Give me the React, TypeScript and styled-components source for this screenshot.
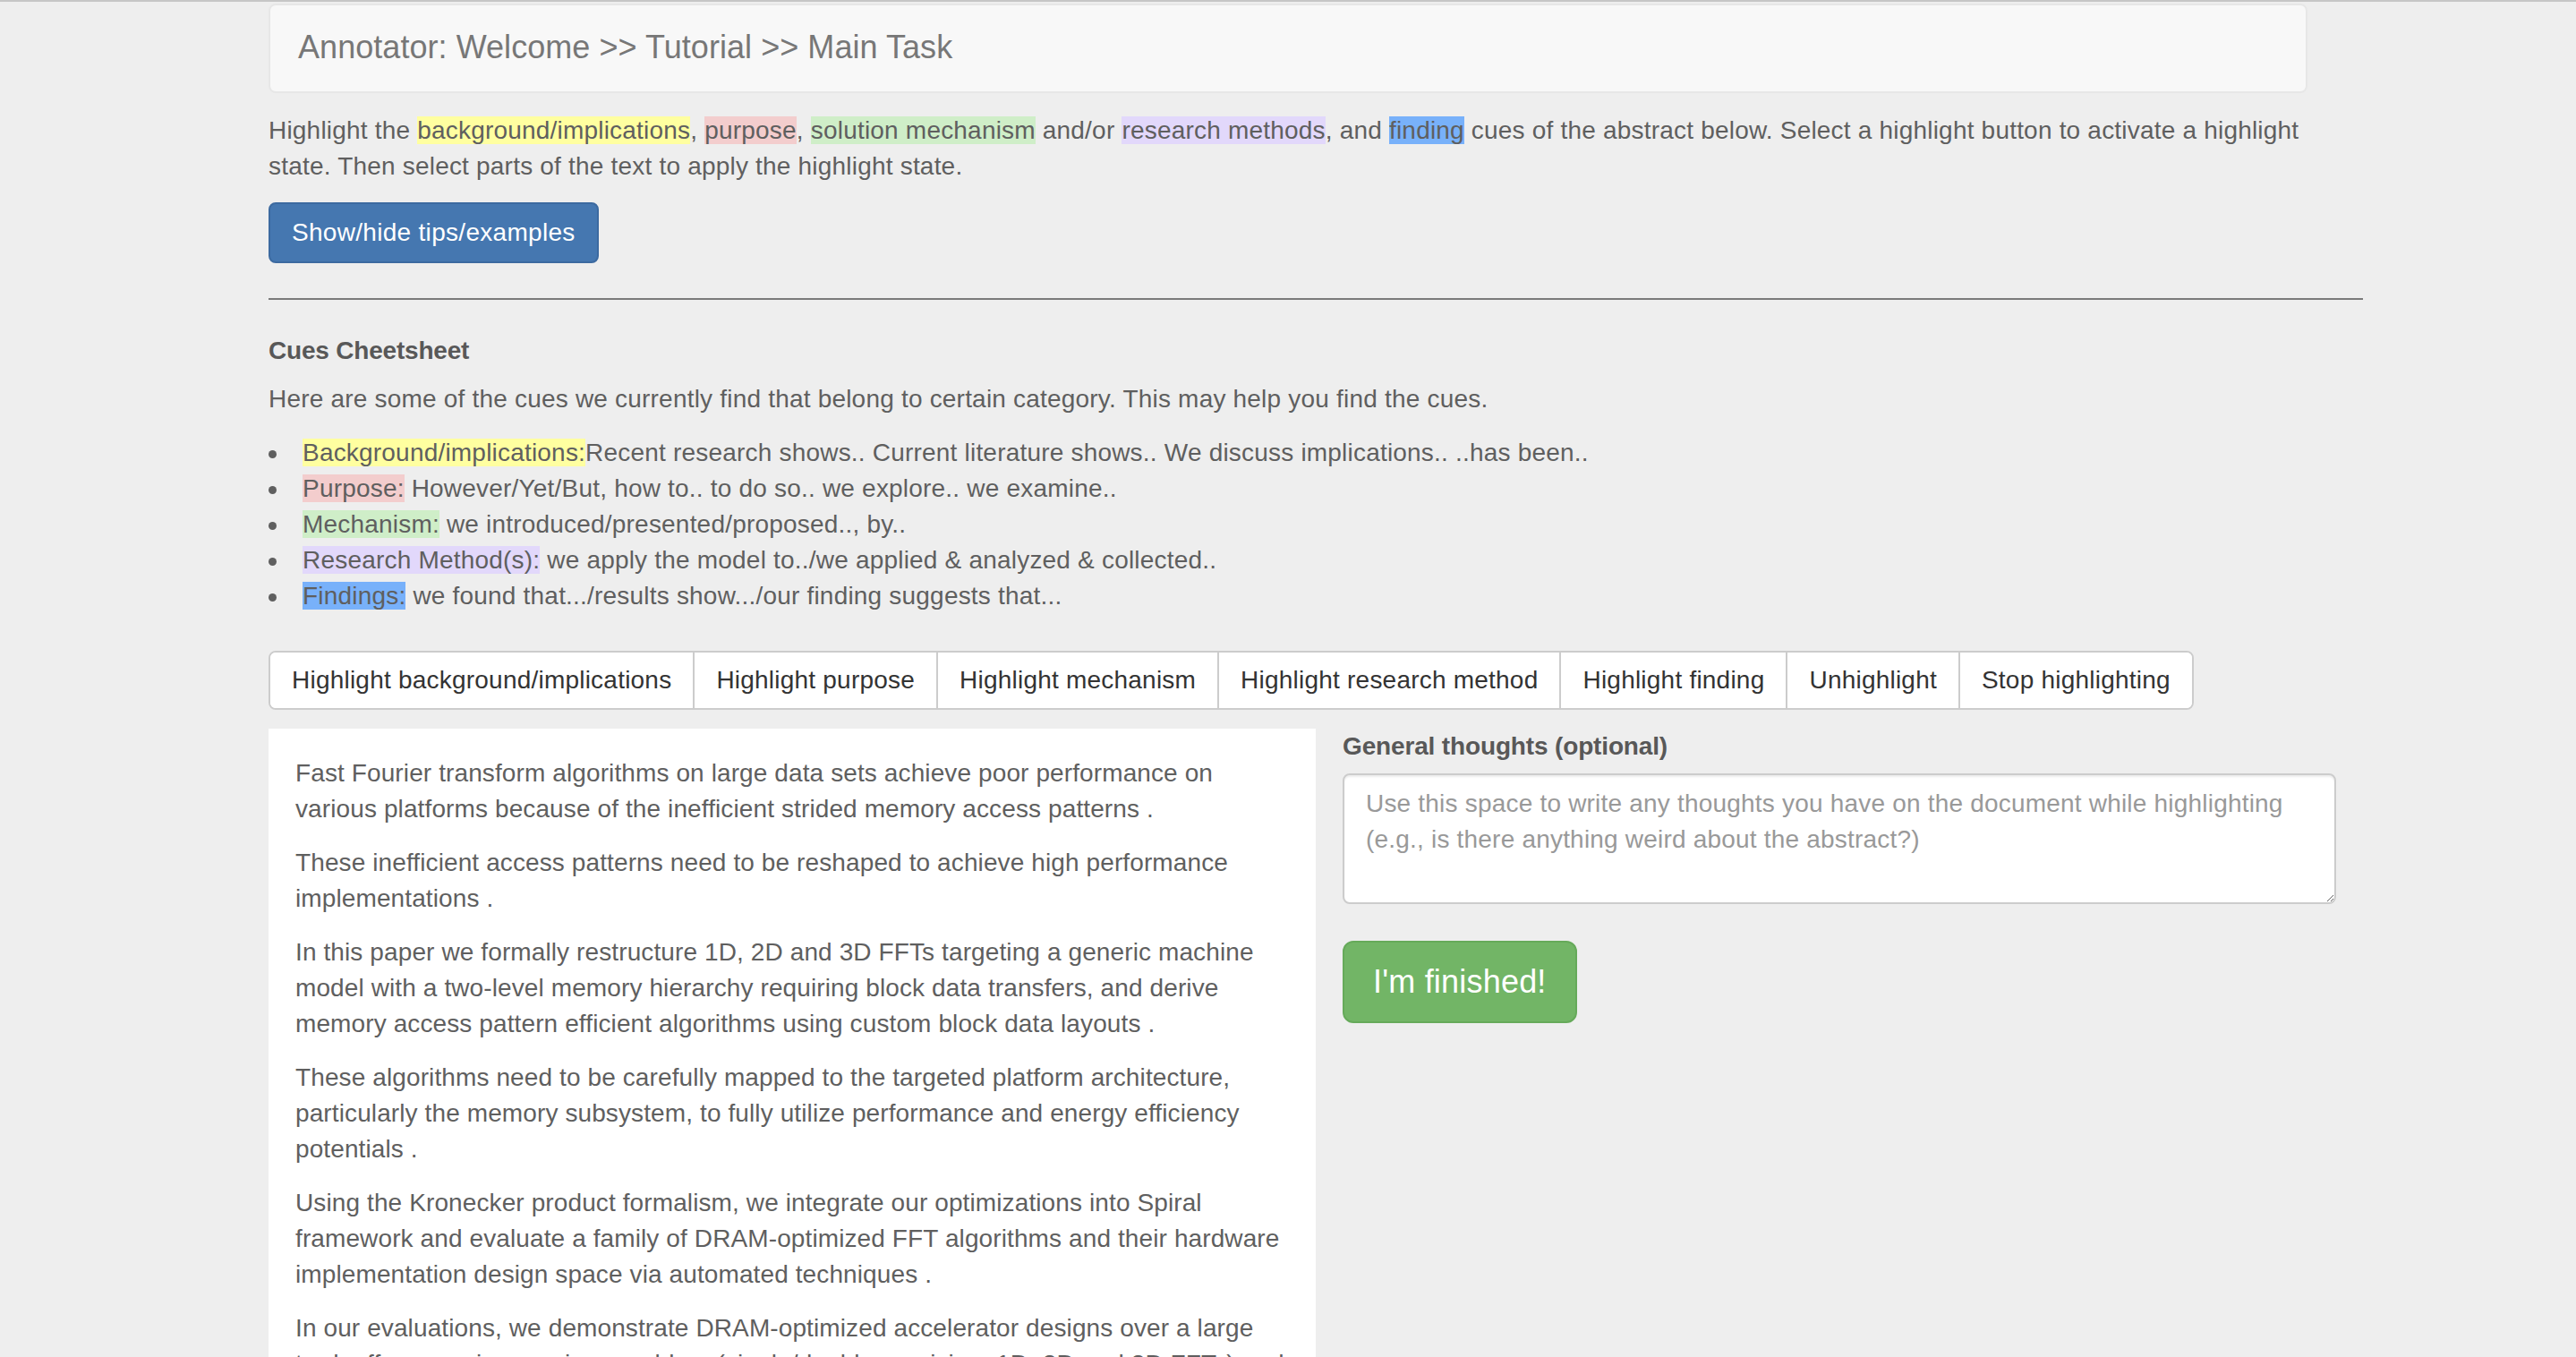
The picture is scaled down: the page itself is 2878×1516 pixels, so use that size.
import React from "react";
import styled, { createGlobalStyle } from "styled-components";

const GlobalStyle = createGlobalStyle`
  html, body {
    margin: 0;
    padding: 0;
    background: #eeeeee;
  }
  body {
    font-family: "Liberation Sans", Arial, Helvetica, sans-serif;
    font-size: 28px;
    line-height: 40px;
    color: #5f5f5f;
    letter-spacing: 0.2px;
  }
  *, *::before, *::after {
    box-sizing: border-box;
  }
`;

const Page = styled.div`
  border-top: 2px solid #c6c6c6;
  padding-top: 2px;
  min-height: 100vh;
  overflow: hidden;
`;

const Container = styled.main`
  margin-left: 300px;
  width: 2340px;
`;

const Navbar = styled.header`
  width: 2278px;
  height: 100px;
  background: #f8f8f8;
  border: 2px solid #e7e7e7;
  border-radius: 8px;
  display: flex;
  align-items: center;
  padding: 0 31px;
`;

const Brand = styled.h1`
  margin: 0 0 3px;
  font-size: 36px;
  line-height: 40px;
  font-weight: normal;
  color: #777777;
  letter-spacing: 0.05px;
`;

const Intro = styled.p`
  width: 2300px;
  margin: 22px 0 20px;
`;

type Cue = "bg" | "purpose" | "mech" | "method" | "finding";

const cueColors: Record<Cue, string> = {
  bg: "#ffffa0",
  purpose: "#f3cdcd",
  mech: "#cfeec8",
  method: "#e2d8fb",
  finding: "#78b1fa",
};

const Mark = styled.span<{ $cue: Cue }>`
  background: ${(p) => cueColors[p.$cue]};
`;

const PrimaryButton = styled.button`
  display: block;
  height: 68px;
  padding: 0 24px;
  font-family: inherit;
  font-size: 28px;
  line-height: 40px;
  letter-spacing: 0.3px;
  color: #ffffff;
  background: #4577b0;
  border: 2px solid #3c6aa0;
  border-radius: 8px;
  cursor: pointer;
`;

const Rule = styled.hr`
  margin: 39px 0 0;
  border: 0;
  border-top: 2px solid #7a7a7a;
  width: 2340px;
`;

const CuesHeading = styled.h2`
  margin: 37px 0 14px;
  font-size: 28px;
  line-height: 40px;
  font-weight: bold;
  color: #585858;
  letter-spacing: -0.2px;
`;

const CuesIntro = styled.p`
  margin: 0 0 20px;
`;

const CueList = styled.ul`
  margin: 0 0 41px;
  padding: 0;
  list-style: none;
`;

const CueItem = styled.li`
  &::before {
    content: "";
    display: inline-block;
    width: 9px;
    height: 9px;
    border-radius: 50%;
    background: #5f5f5f;
    margin-right: 29px;
    vertical-align: middle;
  }
`;

const Toolbar = styled.div`
  display: inline-flex;
  height: 66px;
  background: #ffffff;
  border: 2px solid #cccccc;
  border-radius: 8px;
  overflow: hidden;
`;

const ToolButton = styled.button`
  padding: 0 24px;
  font-family: inherit;
  font-size: 28px;
  line-height: 40px;
  letter-spacing: 0.22px;
  color: #333333;
  background: #ffffff;
  border: 0;
  & + & {
    border-left: 2px solid #cccccc;
  }
  cursor: pointer;
`;

const Columns = styled.div`
  display: grid;
  grid-template-columns: 1170px 1170px;
  margin-top: 21px;
  align-items: start;
`;

const AbstractPanel = styled.section`
  background: #ffffff;
  padding: 30px 30px 10px;
  letter-spacing: 0.11px;
`;

const AbstractPara = styled.p`
  margin: 0 0 20px;
`;

const SidePanel = styled.aside`
  padding: 0 30px;
`;

const FieldLabel = styled.label`
  display: block;
  margin-bottom: 10px;
  font-weight: bold;
  color: #585858;
  letter-spacing: -0.15px;
`;

const Thoughts = styled.textarea`
  display: block;
  width: 100%;
  height: 146px;
  padding: 12px 24px;
  font-family: inherit;
  font-size: 28px;
  line-height: 40px;
  letter-spacing: 0.2px;
  color: #555555;
  background: #ffffff;
  border: 2px solid #cccccc;
  border-radius: 8px;
  box-shadow: inset 0 2px 2px rgba(0, 0, 0, 0.075);
  outline: none;
  &::placeholder {
    color: #999999;
  }
`;

const SuccessButton = styled.button`
  display: block;
  margin-top: 41px;
  height: 92px;
  padding: 0 32px;
  font-family: inherit;
  font-size: 36px;
  line-height: 48px;
  letter-spacing: 0.2px;
  color: #ffffff;
  background: #72b566;
  border: 2px solid #66aa5a;
  border-radius: 12px;
  cursor: pointer;
`;

const tools = [
  "Highlight background/implications",
  "Highlight purpose",
  "Highlight mechanism",
  "Highlight research method",
  "Highlight finding",
  "Unhighlight",
  "Stop highlighting",
];

const abstractParas = [
  "Fast Fourier transform algorithms on large data sets achieve poor performance on various platforms because of the inefficient strided memory access patterns .",
  "These inefficient access patterns need to be reshaped to achieve high performance implementations .",
  "In this paper we formally restructure 1D, 2D and 3D FFTs targeting a generic machine model with a two-level memory hierarchy requiring block data transfers, and derive memory access pattern efficient algorithms using custom block data layouts .",
  "These algorithms need to be carefully mapped to the targeted platform architecture, particularly the memory subsystem, to fully utilize performance and energy efficiency potentials .",
  "Using the Kronecker product formalism, we integrate our optimizations into Spiral framework and evaluate a family of DRAM-optimized FFT algorithms and their hardware implementation design space via automated techniques .",
  "In our evaluations, we demonstrate DRAM-optimized accelerator designs over a large tradeoff space given various problem (single/double precision, 1D, 2D and 3D FFTs) and architecture parameters .",
];

export default function App() {
  return (
    <>
      <GlobalStyle />
      <Page>
        <Container>
          <Navbar>
            <Brand>Annotator: Welcome &gt;&gt; Tutorial &gt;&gt; Main Task</Brand>
          </Navbar>

          <Intro>
            Highlight the <Mark $cue="bg">background/implications</Mark>,{" "}
            <Mark $cue="purpose">purpose</Mark>,{" "}
            <Mark $cue="mech">solution mechanism</Mark> and/or{" "}
            <Mark $cue="method">research methods</Mark>, and{" "}
            <Mark $cue="finding">finding</Mark> cues of the abstract below. Select a
            highlight button to activate a highlight state. Then select parts of the
            text to apply the highlight state.
          </Intro>

          <PrimaryButton type="button">Show/hide tips/examples</PrimaryButton>

          <Rule />

          <CuesHeading>Cues Cheetsheet</CuesHeading>
          <CuesIntro>
            Here are some of the cues we currently find that belong to certain
            category. This may help you find the cues.
          </CuesIntro>
          <CueList>
            <CueItem>
              <Mark $cue="bg">Background/implications:</Mark>Recent research shows..
              Current literature shows.. We discuss implications.. ..has been..
            </CueItem>
            <CueItem>
              <Mark $cue="purpose">Purpose:</Mark> However/Yet/But, how to.. to do so..
              we explore.. we examine..
            </CueItem>
            <CueItem>
              <Mark $cue="mech">Mechanism:</Mark> we introduced/presented/proposed..,
              by..
            </CueItem>
            <CueItem>
              <Mark $cue="method">Research Method(s):</Mark> we apply the model
              to../we applied &amp; analyzed &amp; collected..
            </CueItem>
            <CueItem>
              <Mark $cue="finding">Findings:</Mark> we found that.../results
              show.../our finding suggests that...
            </CueItem>
          </CueList>

          <Toolbar>
            {tools.map((t) => (
              <ToolButton key={t} type="button">
                {t}
              </ToolButton>
            ))}
          </Toolbar>

          <Columns>
            <AbstractPanel>
              {abstractParas.map((p, i) => (
                <AbstractPara key={i}>{p}</AbstractPara>
              ))}
            </AbstractPanel>
            <SidePanel>
              <FieldLabel htmlFor="thoughts">General thoughts (optional)</FieldLabel>
              <Thoughts
                id="thoughts"
                rows={3}
                placeholder="Use this space to write any thoughts you have on the document while highlighting (e.g., is there anything weird about the abstract?)"
              />
              <SuccessButton type="button">I'm finished!</SuccessButton>
            </SidePanel>
          </Columns>
        </Container>
      </Page>
    </>
  );
}
